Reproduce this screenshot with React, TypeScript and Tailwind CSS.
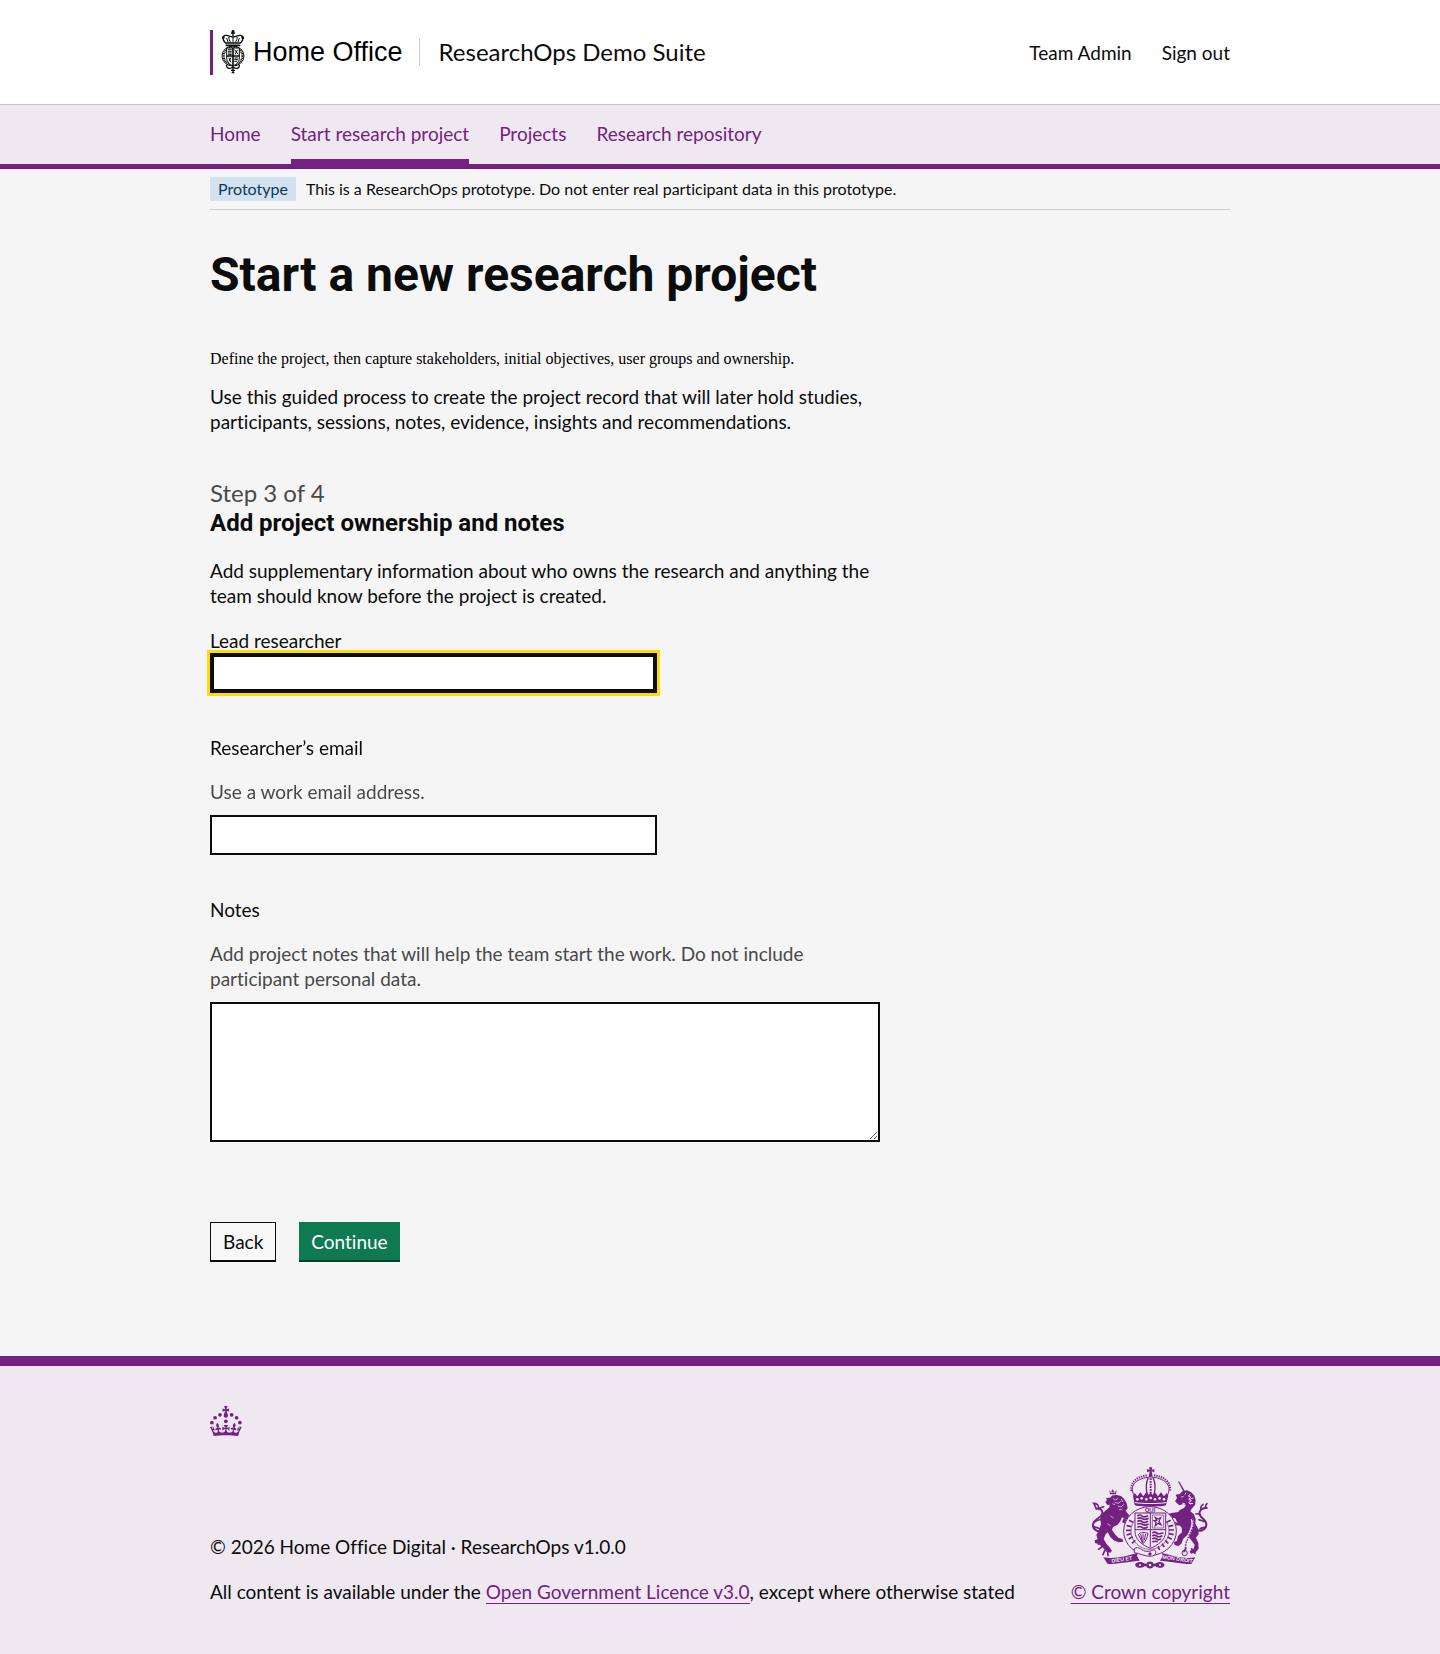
import type { ReactNode } from "react";

const navItems = [
  { label: "Home", href: "#home", active: false },
  { label: "Start research project", href: "#start", active: true },
  { label: "Projects", href: "#projects", active: false },
  { label: "Research repository", href: "#repository", active: false },
];

function Container({
  children,
  className = "",
}: {
  children: ReactNode;
  className?: string;
}) {
  return (
    <div className={`mx-auto w-full max-w-[1080px] px-[30px] ${className}`}>
      {children}
    </div>
  );
}

function HomeOfficeCrest() {
  return (
    <svg viewBox="63 28 72 132" className="h-11 w-6" aria-hidden="true">
      <g fill="none" stroke="#0b0c0c" strokeWidth="3">
        <path d="M99 30v16M93 37h12" strokeWidth="4" />
        <path d="M76 66c-9-9-10-20 0-22 9-1 17 5 23 5s14-6 23-5c10 2 9 13 0 22" strokeWidth="4" />
        <path d="M99 48v16M87 48c-1 6 1 12 5 17M111 48c1 6-1 12-5 17M80 52l4 12M118 52l-4 12" />
        <path d="M75 67h48M77 74h44" strokeWidth="5" />
        <ellipse cx="99" cy="106" rx="33" ry="30" />
        <ellipse cx="99" cy="106" rx="28" ry="26" strokeDasharray="3 2" strokeWidth="6" />
        <path d="M80 82h38v30c0 12-9 19-19 24-10-5-19-12-19-24z" fill="#fff" />
        <path d="M99 82v52M80 106h38" strokeWidth="5" />
        <path d="M84 87h11M84 92h11M84 97h11M84 102h11M103 112h11M103 117h11M103 122h8" />
        <path d="M104 87l10 14M113 87l-8 14M86 111l7 14M93 111l-6 11" />
        <path d="M80 132c-2 12 12 15 19 6 7 9 21 6 19-6M99 138v19" strokeWidth="4" />
        <path d="M93 149h12M95 156h8" strokeWidth="4" />
      </g>
      <g fill="#0b0c0c">
        <circle cx="70" cy="51" r="4" />
        <circle cx="128" cy="51" r="4" />
        <circle cx="99" cy="32" r="4" />
      </g>
    </svg>
  );
}

function CrownIcon() {
  return (
    <svg
      viewBox="0 0 64 60"
      width="32"
      height="30"
      fill="currentColor"
      className="text-[#732282]"
      aria-hidden="true"
    >
      <circle cx="20" cy="17.6" r="3.7" />
      <circle cx="10.2" cy="23.5" r="3.7" />
      <circle cx="3.7" cy="33.2" r="3.7" />
      <circle cx="31.7" cy="30.6" r="3.7" />
      <circle cx="43.3" cy="17.6" r="3.7" />
      <circle cx="53.2" cy="23.5" r="3.7" />
      <circle cx="59.7" cy="33.2" r="3.7" />
      <path d="M33.1,9.8c.2-.1.3-.3.5-.5l4.6,2.4v-6.8l-4.6,1.5c-.1-.2-.3-.3-.5-.5l1.9-5.9h-6.7l1.9,5.9c-.2.1-.3.3-.5.5l-4.6-1.5v6.8l4.6-2.4c.1.2.3.3.5.5l-2.6,8c-.9,2.8,1.2,5.7,4.1,5.7h0c3,0,5.1-2.9,4.1-5.7l-2.6-8ZM37,37.9s-3.4,3.8-4.1,6.1c2.2,0,4.2-.5,6.4-2.8l-.7,8.5c-2-2.8-4.4-4.1-5.7-3.8.1,3.1.5,6.7,5.8,7.2,3.7.3,6.7-1.5,7-3.8.4-2.6-2-4.3-3.7-1.6-1.4-4.5,2.4-6.1,4.9-3.2-1.9-4.5-1.8-7.7,2.4-10.9,3,4,2.6,7.3-1.2,11.1,2.4-1.3,6.2,0,4,4.6-1.2-2.8-3.7-2.2-4.2.2-.3,1.7.7,3.7,3,4.2,1.9.3,4.7-.9,7-5.9-1.3,0-2.4.7-3.9,1.7l2.4-8c.6,2.3,1.4,3.7,2.2,4.5.6-1.6.5-2.8,0-5.3l5,1.8c-2.6,3.6-5.2,8.7-7.3,17.5-7.4-1.1-15.7-1.7-24.5-1.7h0c-8.8,0-17.1.6-24.5,1.7-2.1-8.9-4.7-13.9-7.3-17.5l5-1.8c-.5,2.5-.6,3.7,0,5.3.8-.8,1.6-2.3,2.2-4.5l2.4,8c-1.5-1-2.6-1.7-3.9-1.7,2.3,5,5.2,6.2,7,5.9,2.3-.4,3.3-2.4,3-4.2-.5-2.4-3-3.1-4.2-.2-2.2-4.6,1.6-6,4-4.6-3.7-3.7-4.2-7.1-1.2-11.1,4.2,3.2,4.3,6.4,2.4,10.9,2.5-2.8,6.3-1.3,4.9,3.2-1.8-2.7-4.1-1-3.7,1.6.3,2.3,3.3,4.1,7,3.8,5.4-.5,5.7-4.2,5.8-7.2-1.3-.2-3.7,1-5.7,3.8l-.7-8.5c2.2,2.3,4.2,2.7,6.4,2.8-.7-2.3-4.1-6.1-4.1-6.1h10.6,0Z" />
    </svg>
  );
}

function CoatOfArms() {
  return (
    <svg
      viewBox="45 36 348 306"
      width="116"
      height="102"
      className="text-[#732282]"
      aria-hidden="true"
    >
      {/* crown */}
      <g fill="currentColor">
        <path d="M216 37h10l-2 8 8-3v10l-8-3 3 16h-12l3-16-8 3V42l8 3z" />
        <path d="M168 122l5-8 8 10 9-12 9 12 10-14 6 10 6-8 6 8 6-10 10 14 9-12 9 12 8-10 5 8-7 28c-4 6-90 6-94 0z" />
      </g>
      <g fill="none" stroke="currentColor">
        <path d="M170 119c-14-30 10-50 51-53 41 3 65 23 51 53" strokeWidth="3" />
        <path d="M163 108c-4-26 18-44 48-47M231 61c30 3 52 21 48 47" strokeWidth="6" strokeDasharray="4 3" />
        <path d="M214 68c-6 12-8 28-4 48M228 68c6 12 8 28 4 48" strokeWidth="4" />
        <path d="M221 70v44" strokeWidth="6" strokeDasharray="5 3" />
      </g>
      <g fill="#f0e8f0">
        <circle cx="181" cy="133" r="4" />
        <circle cx="194" cy="130" r="4" />
        <circle cx="208" cy="133" r="4" />
        <circle cx="221" cy="129" r="4" />
        <circle cx="234" cy="133" r="4" />
        <circle cx="248" cy="130" r="4" />
        <circle cx="261" cy="133" r="4" />
        <path d="M174 141c20 4 74 4 94 0v3c-20 4-74 4-94 0z" />
      </g>

      {/* lion */}
      <g fill="currentColor">
        <path d="M99 128l8-7 12-1 13 3 9 8 8 14 3 15-6 7 9 12 14 8 8 10 1 9-9-1-5-8-13-2-16-8-5 12-8 10-14 7-3 9 9 13 10 10 12 4 3 8-13 2-14-5-12-11-8-14-6 6-6 14 8 14 9 10 8 11-5 6-11-2-8-9-11-11-8-5-8-2-1-8 9-3-4-13 8-15 6-17-2-17 3-13 14-12 10-9 1-8-7 1-6-9 5-6-3-6z" />
        <path d="M140 190l12 6 11 14 10 3-2 8-12-1-12-12-12-7z" />
        <path d="M97 106l5 6 5-9 6 9 6-6-2 12h-18z" />
      </g>
      <g fill="none" stroke="currentColor" strokeLinecap="round">
        <path d="M76 228c-16 4-30-6-28-20 2-15 22-18 27-30 4-10-4-20-17-17" strokeWidth="6" />
        <path d="M58 161c-4-6-4-11-8-16 10 0 14 6 15 12M66 163c4-6 8-6 14-8M55 200c6-6 14-4 18-8M52 215c5 4 12 2 17 7" strokeWidth="5" />
        <path d="M74 264l-10 3M76 274l-11 9M83 287l-5 12M92 291l1 11" strokeWidth="5" />
      </g>
      <g fill="none" stroke="#f0e8f0" strokeWidth="2">
        <path d="M108 130l7 5 9-5M113 142l12 3 7-8M122 153l10 3 8-8M126 164l10-1M100 182l10 8M91 206l10 6M98 112h18M133 132l5 9M106 146l8 3" />
      </g>

      {/* unicorn */}
      <g fill="currentColor">
        <path d="M302 77l6 5 16 27-4 3z" />
        <path d="M294 139l6-10-4-10 12-2 8-8 14-3 13 6 9 10 4 14-2 14-10 11-4 8 10 8 6 14-1 15 9 16 1 15-8 11 7 16 1 17-10 12-14 3-3-8 12-6 3-13-13-17-9-12-12 11-6 15-9 7-10-2-4-9 10-5 3-14 12-11-1-14-12-14-8-15-19 0-7 8-8-1-1-10 9-8 16-4 20-3 4-6 13-6 6-9-8-3-12 4-7-6z" />
        <path d="M278 204l12-4 15 4 4 8-17-2-7 8-8-3z" />
      </g>
      <g fill="none" stroke="currentColor" strokeLinecap="round">
        <path d="M354 224c16 8 34 0 34-16 0-14-16-18-20-29-3-10 6-22 21-20" strokeWidth="6" />
        <path d="M372 164c-2-6 0-12 6-16M386 158c-1-6 0-9 4-12M370 179c-5-3-8-4-13-2M381 200c-4-4-10-3-15-6M386 216c-5 3-12 0-17 6" strokeWidth="5" />
        <path d="M321 290l6-11M344 281l10 14" strokeWidth="5" />
      </g>
      <g fill="none" stroke="#f0e8f0" strokeWidth="3">
        <path d="M340 118l-6 5 8 4-7 6 8 4-8 6 6 5M327 113l-3 6M313 126l6-1M349 129l-9 3M348 145l-9 1M316 144l8 3" />
        <path d="M344 192c8 18-2 32-7 44-7 16-14 28-14 44" strokeWidth="7" />
      </g>
      <g fill="none" stroke="currentColor">
        <path d="M346 192c8 18-2 32-7 44-7 16-14 28-14 44" strokeWidth="4" strokeDasharray="5 3" />
        <circle cx="323" cy="294" r="8" strokeWidth="3" />
      </g>

      {/* garter and shield */}
      <ellipse cx="219" cy="228" rx="80" ry="73" fill="#f0e8f0" />
      <g fill="none" stroke="currentColor">
        <ellipse cx="219" cy="228" rx="79" ry="73" strokeWidth="3" />
        <ellipse cx="219" cy="228" rx="57" ry="55" strokeWidth="2" />
        <path d="M149 212l14 3M147 226h15M149 240l13-4M155 252l12-7M165 265l10-9M156 196l12 6M274 265l-10-9M284 253l-12-7M290 239l-14-3M291 225h-15M289 211l-14 3M281 196l-12 6M248 285l-5-11M262 276l-7-10M175 175l8 9M264 175l-8 9" strokeWidth="5" />
      </g>
      <text
        x="219"
        y="171"
        textAnchor="middle"
        fill="currentColor"
        className="font-['Liberation_Sans'] text-[18px] font-bold"
      >
        QUI
      </text>
      <path d="M174 174h92v56c0 25-24 41-46 50-22-9-46-25-46-50z" fill="#f0e8f0" stroke="currentColor" strokeWidth="3" />
      <g fill="none" stroke="currentColor">
        <path d="M220 174v103M174 224h92" strokeWidth="3" />
        <path d="M181 183q8-6 14 0t18-1M181 191q8-5 15 0t19-1M181 200q8-6 14 0t18-1M181 208q8-5 15 0t19-1M181 217q8-5 14 0t18-1" strokeWidth="5" />
        <path d="M226 234q7-5 13 0t20-1M226 243q7-5 13 0t17-1M226 252q7-5 13 0t13-1M226 261q7-4 16-1" strokeWidth="5" />
        <path d="M226 180h34v39h-34z" strokeWidth="2" />
        <path d="M235 188l8 4 8-4-5 11 6 10-9-4-8 7 2-10-6-5 8-1z" strokeWidth="4" />
        <path d="M184 239c7-9 19-7 29-4-2 14-7 23-15 31zM191 237l5 24M198 236v25M206 237l-4 18" strokeWidth="3" />
      </g>
      <path d="M172 281c14-10 22 8 38 8 18 0 20-8 25-2 5 8-4 17-15 17-18 0-32-9-48-11z" fill="#f0e8f0" stroke="currentColor" strokeWidth="3" />
      <circle cx="219" cy="297" r="5" fill="currentColor" />

      {/* scroll and flowers */}
      <g fill="currentColor">
        <path d="M79 307c35 6 66-3 103-13l-2 9 8 14c-26 1-58 10-96 10z" />
        <path d="M355 307c-34 6-64-3-100-13l2 9-8 14c27 1 58 10 94 10z" />
        <path d="M174 330c3-10 18-12 27-5l7 2c2-10 20-10 22 0l7-2c10-7 22-4 26 5-3 10-19 11-27 4l-6 0c-4 9-18 9-22 0l-6 0c-8 7-24 6-28-4z" />
      </g>
      <g fill="#f0e8f0">
        <circle cx="189" cy="330" r="3" />
        <circle cx="249" cy="330" r="3" />
        <circle cx="219" cy="330" r="4" />
      </g>
      <g fill="#f0e8f0" className="font-['Liberation_Sans'] text-[16px] font-bold">
        <text x="104" y="323" transform="rotate(-8 104 323)">DIEU ET</text>
        <text x="256" y="311" transform="rotate(8 256 311)">MON DROIT</text>
      </g>
    </svg>
  );
}

function SiteHeader() {
  return (
    <header className="bg-white">
      <Container className="flex h-[104px] items-center justify-between">
        <div className="flex items-center">
          <a
            href="#home"
            className="flex h-[45px] items-center border-l-[3px] border-[#732282] pl-2"
          >
            <HomeOfficeCrest />
            <span className="pl-2 font-['Liberation_Sans',sans-serif] text-[27px] leading-[30px] text-black">
              Home Office
            </span>
          </a>
          <a
            href="#start"
            className="ml-4 border-l border-[#cecece] pl-[19px] text-2xl leading-7"
          >
            ResearchOps Demo Suite
          </a>
        </div>
        <div className="flex gap-[30px]">
          <a href="#team">Team Admin</a>
          <a href="#sign-out">Sign out</a>
        </div>
      </Container>
      <nav
        aria-label="Main"
        className="border-t border-b-[5px] border-t-[#cdb8d5] border-b-[#732282] bg-[#f0e8f0]"
      >
        <Container>
          <ul className="flex gap-[30px]">
            {navItems.map((item) => (
              <li key={item.label}>
                <a
                  href={item.href}
                  aria-current={item.active ? "page" : undefined}
                  className={`block border-b-[5px] pt-4 pb-[13px] text-[#732282] ${
                    item.active ? "border-[#732282]" : "border-transparent"
                  }`}
                >
                  {item.label}
                </a>
              </li>
            ))}
          </ul>
        </Container>
      </nav>
    </header>
  );
}

function PhaseBanner() {
  return (
    <Container>
      <div className="flex items-center gap-2.5 border-b border-[#cecece] py-2 text-base leading-6">
        <strong className="bg-[#d2e2f1] px-2 font-normal text-[#0f385c]">
          Prototype
        </strong>
        <span>
          This is a ResearchOps prototype. Do not enter real participant data in
          this prototype.
        </span>
      </div>
    </Container>
  );
}

interface FieldProps {
  id: string;
  label: string;
  hint?: string;
  children: ReactNode;
}

function Field({ id, label, hint, children }: FieldProps) {
  return (
    <div className="flex flex-col items-start">
      <label htmlFor={id}>{label}</label>
      {hint && (
        <p id={`${id}-hint`} className="mt-[19px] mb-[11px] text-[#484949]">
          {hint}
        </p>
      )}
      {children}
    </div>
  );
}

const inputClass =
  "border-2 border-[#0b0c0c] bg-white p-[5px] focus:shadow-[inset_0_0_0_2px_#0b0c0c] focus:outline-[3px] focus:outline-[#ffdd00] focus:outline-solid";

function OwnershipForm() {
  return (
    <form onSubmit={(e) => e.preventDefault()}>
      <div className="mt-5 flex flex-col gap-[42px]">
        <Field id="lead" label="Lead researcher">
          <input
            id="lead"
            type="text"
            autoFocus
            className={`h-10 w-full max-w-[447px] caret-transparent ${inputClass}`}
          />
        </Field>
        <Field
          id="email"
          label="Researcher’s email"
          hint="Use a work email address."
        >
          <input
            id="email"
            type="email"
            aria-describedby="email-hint"
            className={`h-10 w-full max-w-[447px] ${inputClass}`}
          />
        </Field>
        <Field
          id="notes"
          label="Notes"
          hint="Add project notes that will help the team start the work. Do not include participant personal data."
        >
          <textarea
            id="notes"
            aria-describedby="notes-hint"
            className={`h-[140px] w-full resize-y ${inputClass}`}
          />
        </Field>
      </div>
      <div className="mt-20 flex gap-[23px]">
        <button
          type="button"
          className="h-10 border border-b-2 border-[#0b0c0c] bg-[#f8f8f8] px-3"
        >
          Back
        </button>
        <button
          type="submit"
          className="h-10 border-b-2 border-[#083d29] bg-[#0f7a52] px-3 text-white"
        >
          Continue
        </button>
      </div>
    </form>
  );
}

function SiteFooter() {
  const linkClass = "border-b border-[#732282] text-[#732282]";

  return (
    <footer className="border-t-[10px] border-[#732282] bg-[#f0e8f0] pt-10 pb-[50px]">
      <Container>
        <CrownIcon />
        <div className="mt-[31px] flex flex-wrap items-end justify-between gap-5">
          <div className="flex flex-col gap-5">
            <p>© 2026 Home Office Digital · ResearchOps v1.0.0</p>
            <p>
              All content is available under the{" "}
              <a href="#licence" className={linkClass}>
                Open Government Licence v3.0
              </a>
              , except where otherwise stated
            </p>
          </div>
          <a href="#copyright" className="flex flex-col items-center gap-2.5">
            <CoatOfArms />
            <span className="text-[#732282] underline decoration-1 underline-offset-4">
              © Crown copyright
            </span>
          </a>
        </div>
      </Container>
    </footer>
  );
}

export default function App() {
  return (
    <div className="min-h-screen bg-[#f5f5f5] font-['Lato',sans-serif] text-[19px] leading-[25px] text-[#0b0c0c] [font-variant-ligatures:none]">
      <SiteHeader />
      <PhaseBanner />
      <Container>
        <main className="max-w-[670px] pt-10 pb-[94px]">
          <h1 className="mb-[50px] font-['Roboto',sans-serif] text-5xl leading-[50px] font-bold">
            Start a new research project
          </h1>
          <p className="mb-4 font-['Liberation_Serif',serif] text-base leading-[18px] text-black">
            Define the project, then capture stakeholders, initial objectives,
            user groups and ownership.
          </p>
          <p className="mb-11">
            Use this guided process to create the project record that will later
            hold studies, participants, sessions, notes, evidence, insights and
            recommendations.
          </p>
          <h2 className="mb-5 font-['Roboto',sans-serif] text-2xl leading-[30px] font-bold">
            <span className="block font-['Lato',sans-serif] font-normal text-[#484949]">
              Step 3 of 4
            </span>
            Add project ownership and notes
          </h2>
          <p>
            Add supplementary information about who owns the research and
            anything the team should know before the project is created.
          </p>
          <OwnershipForm />
        </main>
      </Container>
      <SiteFooter />
    </div>
  );
}
